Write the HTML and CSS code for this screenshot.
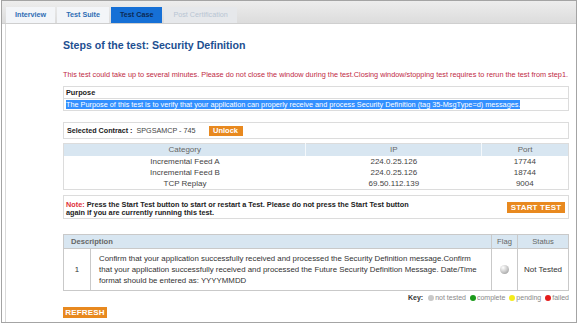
FILE: index.html
```html
<!DOCTYPE html>
<html>
<head>
<meta charset="utf-8">
<link rel="stylesheet" href="styles.css">
</head>
<body>
<div class="frame">
  <div class="tabbar">
    <span class="tab">Interview</span>
    <span class="tab">Test Suite</span>
    <span class="tab active">Test Case</span>
    <span class="tab disabled">Post Certification</span>
  </div>
  <div class="panel">
    <h1 class="title">Steps of the test: Security Definition</h1>
    <p class="warning">This test could take up to several minutes. Please do not close the window during the test.Closing window/stopping test requires to rerun the test from step1.</p>

    <table class="purpose">
      <tr><th>Purpose</th></tr>
      <tr><td><span class="selected">The Purpose of this test is to verify that your application can properly receive and process Security Definition (tag 35-MsgType=d) messages.</span></td></tr>
    </table>

    <div class="contract">
      <span class="contract-label">Selected Contract :</span>
      <span class="contract-value">SPGSAMCP - 745</span>
      <span class="btn btn-small">Unlock</span>
    </div>

    <table class="feeds">
      <tr class="head"><th class="c-cat">Category</th><th class="c-ip">IP</th><th class="c-port">Port</th></tr>
      <tr><td>Incremental Feed A</td><td>224.0.25.126</td><td>17744</td></tr>
      <tr><td>Incremental Feed B</td><td>224.0.25.126</td><td>18744</td></tr>
      <tr><td>TCP Replay</td><td>69.50.112.139</td><td>9004</td></tr>
    </table>

    <div class="note">
      <div class="note-text">
        <div class="note-line"><span class="note-label">Note:</span> Press the Start Test button to start or restart a Test. Please do not press the Start Test button</div>
        <div class="note-line">again if you are currently running this test.</div>
      </div>
      <span class="btn btn-start">START TEST</span>
    </div>

    <table class="steps">
      <tr class="head"><th colspan="2" class="h-desc">Description</th><th class="h-flag">Flag</th><th class="h-status">Status</th></tr>
      <tr>
        <td class="s-num">1</td>
        <td class="s-desc">Confirm that your application successfully received and processed the Security Definition message.Confirm that your application successfully received and processed the Future Security Definition Message. Date/Time format should be entered as: YYYYMMDD</td>
        <td class="s-flag"><span class="ball"></span></td>
        <td class="s-status">Not Tested</td>
      </tr>
    </table>

    <div class="key">
      <span class="key-label">Key:</span>
      <span class="dot gray"></span><span>not tested</span>
      <span class="dot green"></span><span>complete</span>
      <span class="dot yellow"></span><span>pending</span>
      <span class="dot red"></span><span>failed</span>
    </div>

    <span class="btn btn-refresh">REFRESH</span>
  </div>
</div>
</body>
</html>
```
FILE: styles.css
```css
* { box-sizing: border-box; }
html, body { margin: 0; padding: 0; background: #ffffff; }
body { font-family: "Liberation Sans", Arial, sans-serif; color: #333; }

.frame {
  margin-left: 1px;
  width: 576px;
  height: 323px;
  border: 1px solid #a4a4a4;
  overflow: hidden;
}

.tabbar {
  height: 23px;
  display: flex;
  align-items: flex-end;
  gap: 2px;
  padding-left: 4px;
  background: linear-gradient(#ededed, #dcdcdc);
  border-bottom: 1px solid #cfcfcf;
}
.tab {
  height: 16px;
  line-height: 16px;
  padding: 0 9px;
  font-size: 7.2px;
  font-weight: bold;
  color: #2f6db4;
  background: #f3f5f8;
}
.tab.active { background: #1670d6; color: #0c2a55; }
.tab.disabled { background: #e6e8eb; color: #b8c5d3; font-weight: normal; }

.panel {
  margin-left: 3px;
  height: 298px;
  border-left: 1px solid #dadada;
  padding: 14px 0 0 57px;
}
.panel > * { width: 506px; }

.title {
  margin: 0;
  height: 14px;
  line-height: 14px;
  font-size: 10.6px;
  font-weight: bold;
  color: #1d4f91;
}
.warning {
  margin: 18px 0 0;
  line-height: 10px;
  font-size: 7.3px;
  color: #c02a45;
  white-space: nowrap;
}

table { border-collapse: collapse; }

.purpose {
  margin-top: 6px;
  border: 1px solid #dcdcdc;
}
.purpose th, .purpose td {
  height: 12px;
  padding: 0 2px;
  text-align: left;
  font-size: 7.3px;
  line-height: 11px;
  border: 1px solid #dcdcdc;
}
.purpose th { color: #222; }
.selected { background: #3390ff; color: #ffffff; }

.contract {
  margin-top: 11px;
  height: 17px;
  border: 1px solid #dcdcdc;
  display: flex;
  align-items: center;
  padding-left: 3px;
  font-size: 7.2px;
}
.contract-label { font-weight: bold; color: #222; }
.contract-value { margin-left: 4px; color: #444; }

.btn {
  display: inline-block;
  background: #e8891f;
  color: #ffffff;
  font-weight: bold;
  text-align: center;
}
.btn-small {
  margin-left: 13px;
  width: 34px;
  height: 10px;
  line-height: 10px;
  font-size: 7.5px;
}

.feeds {
  margin-top: 4px;
  border: 1px solid #dcdcdc;
  font-size: 8px;
  color: #444;
}
.feeds th, .feeds td {
  padding: 0;
  text-align: center;
  font-weight: normal;
  line-height: 11px;
  height: 11px;
}
.feeds .head th {
  height: 12px;
  background: #d8e6f1;
  color: #666;
  border-left: 1px solid #f4f8fb;
}
.feeds .head th:first-child { border-left: none; }
.c-cat { width: 243px; }
.c-ip { width: 176px; }
.c-port { width: 87px; }

.note {
  margin-top: 5px;
  height: 24px;
  border: 1px solid #dcdcdc;
  display: flex;
  align-items: flex-start;
  justify-content: space-between;
  padding: 5px 3px 0 2px;
}
.note-text {
  font-size: 7.3px;
  font-weight: bold;
  color: #222;
}
.note-line {
  height: 8.6px;
  line-height: 8.6px;
  white-space: nowrap;
}
.note-label { color: #e0303a; }
.btn-start {
  margin-top: 1px;
  width: 58px;
  height: 11px;
  line-height: 11px;
  font-size: 8px;
  letter-spacing: 0.2px;
}

.steps {
  margin-top: 15px;
  border: 1px solid #bdbdbd;
  font-size: 7.85px;
  color: #333;
}
.steps th, .steps td { border: 1px solid #c9c9c9; padding: 0; }
.steps .head th {
  height: 14px;
  background: #d8e6f1;
  color: #666;
  font-weight: normal;
  font-size: 7.6px;
}
.h-desc { text-align: left; padding-left: 7px !important; font-weight: bold !important; }
.h-flag { width: 26px; }
.h-status { width: 51px; }
.s-num { width: 27px; text-align: center; }
.s-desc { padding: 4px 10px 4px 8px !important; line-height: 11px; }
.s-flag { text-align: center; }
.s-status { text-align: center; font-size: 8px; }
.ball {
  display: inline-block;
  width: 9px;
  height: 9px;
  border-radius: 50%;
  background: radial-gradient(circle at 35% 30%, #ffffff, #c4c4c4 55%, #8a8a8a);
  vertical-align: middle;
}

.key {
  margin-top: 3px;
  display: flex;
  justify-content: flex-end;
  align-items: center;
  gap: 1px;
  font-size: 7px;
  line-height: 8px;
  color: #888;
}
.key-label { font-weight: bold; color: #333; margin-right: 1px; }
.dot {
  width: 6px;
  height: 6px;
  border-radius: 50%;
  margin-left: 3px;
}
.dot.gray { background: #c9c9c9; }
.dot.green { background: #1c9a1c; }
.dot.yellow { background: #f4ec1c; }
.dot.red { background: #e41b1b; }

.btn-refresh {
  display: block;
  margin-top: 5px;
  width: 44px;
  height: 11px;
  line-height: 11px;
  font-size: 8px;
  letter-spacing: 0.2px;
}
```
